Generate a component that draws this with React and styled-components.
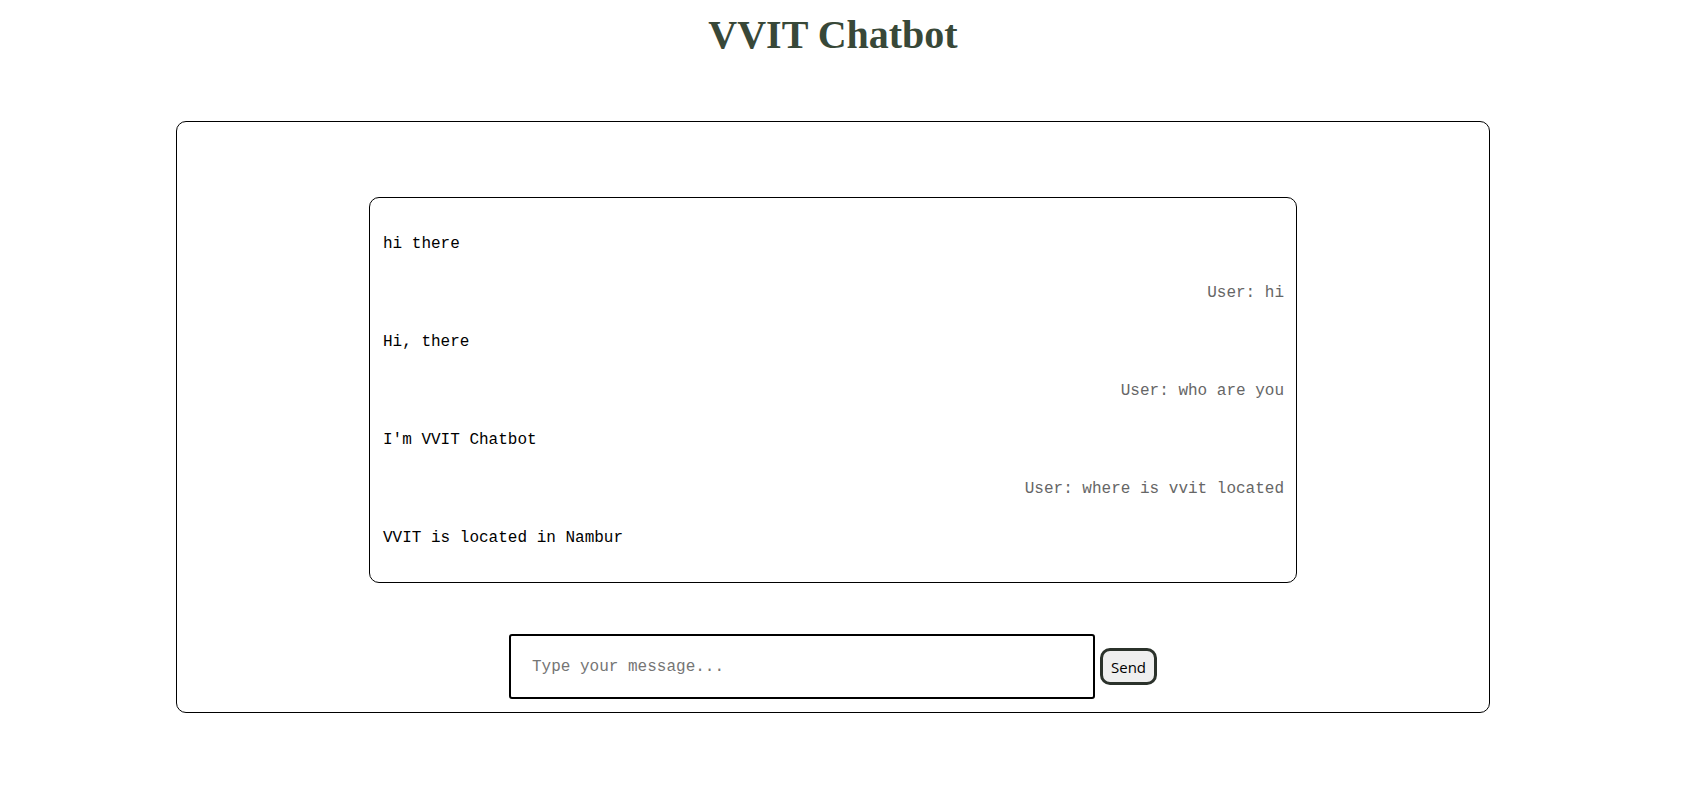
import React, { useState } from 'react';
import styled, { createGlobalStyle } from 'styled-components';

const GlobalStyle = createGlobalStyle`
  body {
    margin: 0;
    background: #ffffff;
  }
`;

const Page = styled.div`
  width: 1666px;
`;

const Title = styled.h1`
  margin: 12px 0 63px;
  text-align: center;
  font-family: "Liberation Serif", "Times New Roman", serif;
  font-weight: bold;
  font-size: 40px;
  line-height: 46px;
  color: #384838;
`;

const ChatContainer = styled.div`
  box-sizing: border-box;
  width: 1314px;
  margin: 0 auto;
  padding: 75px 0 13px;
  border: 1px solid #000;
  border-radius: 10px;
`;

const MessageList = styled.div`
  box-sizing: border-box;
  width: 928px;
  margin: 0 auto;
  padding: 22px 12px 19px 13px;
  border: 1px solid #000;
  border-radius: 10px;
`;

const Message = styled.div`
  padding: 15px 0;
  font-family: "Liberation Mono", "DejaVu Sans Mono", monospace;
  font-size: 16px;
  line-height: 19px;
  white-space: pre;
  text-align: ${(p) => (p.$user ? 'right' : 'left')};
  color: ${(p) => (p.$user ? '#666666' : '#000000')};
`;

const InputRow = styled.form`
  display: flex;
  justify-content: center;
  align-items: center;
  gap: 5px;
  margin-top: 51px;
`;

const MessageInput = styled.input`
  box-sizing: border-box;
  width: 586px;
  height: 65px;
  padding: 0 21px;
  border: 2px solid #000;
  border-radius: 3px;
  font-family: "Liberation Mono", "DejaVu Sans Mono", monospace;
  font-size: 16px;
  outline: none;

  &::placeholder {
    color: #757575;
  }
`;

const SendButton = styled.button`
  box-sizing: border-box;
  width: 57px;
  height: 37px;
  padding: 0;
  border: 3px solid #2b322b;
  border-radius: 10px;
  background: #efefef;
  font-family: "Open Sans", "Liberation Sans", sans-serif;
  font-size: 15px;
  color: #000;
  cursor: pointer;
`;

const initialMessages = [
  { from: 'bot', text: 'hi there' },
  { from: 'user', text: 'User: hi' },
  { from: 'bot', text: 'Hi, there' },
  { from: 'user', text: 'User: who are you' },
  { from: 'bot', text: "I'm VVIT Chatbot" },
  { from: 'user', text: 'User: where is vvit located' },
  { from: 'bot', text: 'VVIT is located in Nambur' },
];

export default function App() {
  const [messages] = useState(initialMessages);
  const [text, setText] = useState('');

  return (
    <Page>
      <GlobalStyle />
      <Title>VVIT Chatbot</Title>
      <ChatContainer>
        <MessageList>
          {messages.map((m, i) => (
            <Message key={i} $user={m.from === 'user'}>
              {m.text}
            </Message>
          ))}
        </MessageList>
        <InputRow onSubmit={(e) => e.preventDefault()}>
          <MessageInput
            type="text"
            placeholder="Type your message..."
            value={text}
            onChange={(e) => setText(e.target.value)}
          />
          <SendButton type="submit">Send</SendButton>
        </InputRow>
      </ChatContainer>
    </Page>
  );
}
